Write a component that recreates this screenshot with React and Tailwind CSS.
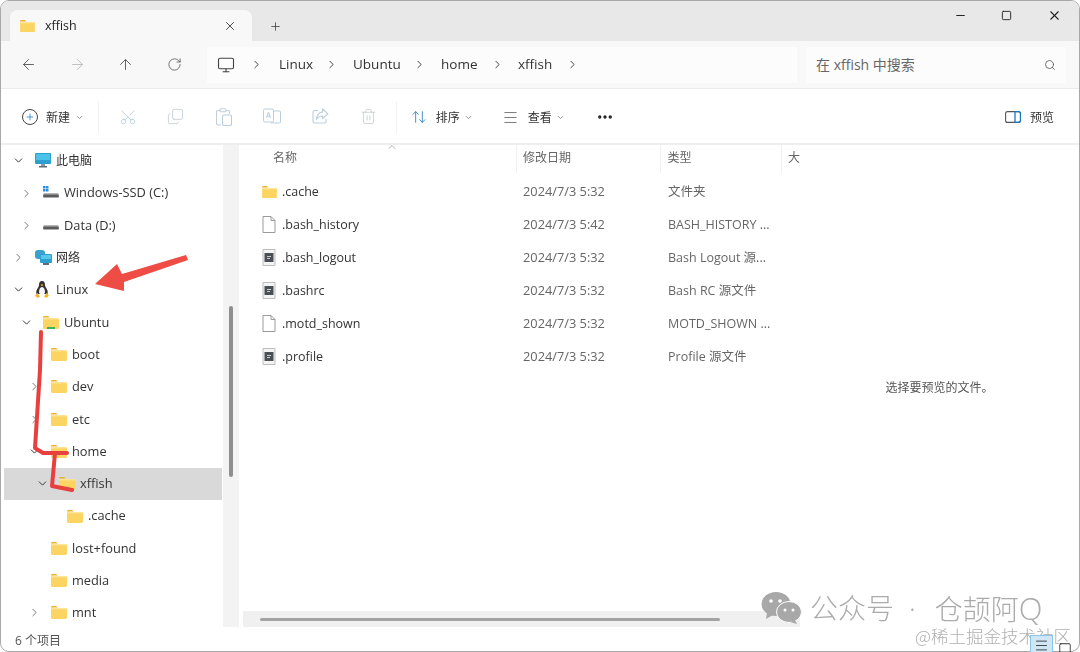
import React from "react";
import { ArrowLeft, ArrowRight, ArrowUp, RotateCw, ChevronRight, ChevronDown, ChevronUp, X, Plus, Minus, Square, Search, Monitor, Scissors, Copy, Trash2, ArrowUpDown, Menu, Ellipsis } from "lucide-react";

const Folder = ({ w = 16, h = 13, green = false }) => (
  <svg width={w} height={h} viewBox="0 0 16 13" className="shrink-0">
    <path d="M0 1.2C0 .5.5 0 1.2 0h4l1.6 1.6H0z" fill="#e9b12f" />
    <path d="M0 2.2h14.8c.7 0 1.2.5 1.2 1.2v8.4c0 .7-.5 1.2-1.2 1.2H1.2C.5 13 0 12.5 0 11.8z" fill="#fcd462" />
    <path d="M0 2.2h16v1.2H0z" fill="#fde59a" />
    {green && <path d="M4 11h8v2H4z" fill="#3fb05a" />}
  </svg>
);

const Tux = () => (
  <svg width="14" height="17" viewBox="0 0 14 17" className="shrink-0">
    <path d="M7 0C4.600 0 4 2 4 4c0 1.500-.9 2.600-1.800 4C1.300 9.500 1 11 1.500 13h11c.5-2 .2-3.500-.7-5C10.900 6.600 10 5.500 10 4c0-2-.6-4-3-4z" fill="#333" />
    <path d="M7 6c-1.900 0-3 2.500-3 5 0 1.500 1 2.500 3 2.500s3-1 3-2.500c0-2.500-1.100-5-3-5z" fill="#f5f5f5" />
    <path d="M5.500 3.800 7 3.200l1.500.6L7 5.200z" fill="#f0b429" />
    <path d="M0 14.500 2.500 12 5 15.500 2.500 17zM14 14.500 11.500 12 9 15.500 11.500 17z" fill="#f0b429" />
  </svg>
);

const PcIcon = () => (
  <svg width="16" height="15" viewBox="0 0 16 15" className="shrink-0">
    <rect x="0" y="0" width="16" height="11" rx="1" fill="#2a9fd0" />
    <rect x="1" y="1" width="14" height="6" fill="#4cc2e8" />
    <rect x="6" y="11" width="4" height="2" fill="#8a9aa5" />
    <rect x="4" y="13" width="8" height="1.500" fill="#5e6e78" />
  </svg>
);

const Drive = ({ win = false }) => (
  <svg width="16" height="14" viewBox="0 0 16 14" className="shrink-0">
    {win && <g fill="#2a8fe0"><rect x="0" y="0" width="2.500" height="2.500" /><rect x="3" y="0" width="2.500" height="2.500" /><rect x="0" y="3" width="2.500" height="2.500" /><rect x="3" y="3" width="2.500" height="2.500" /></g>}
    <path d="M1 7.500h14l.8 1.500v2.500H.2V9z" fill="#5c5c5c" />
    <path d="M1 7h14l.5 1.500H.5z" fill="#b5b5b5" />
  </svg>
);

const NetIcon = () => (
  <svg width="17" height="16" viewBox="0 0 17 16" className="shrink-0">
    <rect x="0" y="0" width="10" height="9" rx="3" fill="#3aa0cc" />
    <rect x="5" y="4" width="12" height="9" rx="1" fill="#2a9fd0" />
    <rect x="6" y="5" width="10" height="4" fill="#57c8ea" />
    <rect x="8" y="13" width="6" height="2" fill="#5e6e78" />
  </svg>
);

const TreeRow = ({ depth = 0, arrow, icon, label, selected, cjk }) => (
  <div className={`flex items-center h-[32.3px] shrink-0 ${selected ? "bg-[#d9d9d9]" : ""}`} style={{ paddingLeft: 6 + depth * 8 }}>
    <span className="w-[16px] flex justify-center text-[#777] shrink-0">
      {arrow === "down" && <ChevronDown size={13} strokeWidth={1.800} className="text-[#333]" />}
      {arrow === "right" && <ChevronRight size={13} strokeWidth={1.800} />}
    </span>
    <span className="w-[21px] ml-[9px] flex items-center shrink-0">{icon}</span>
    <span className={`${cjk ? "text-[12px]" : "text-[12.800px]"} text-[#333] whitespace-nowrap`}>{label}</span>
  </div>
);

const PlainDoc = () => (
  <svg width="14" height="17" viewBox="0 0 14 17" className="shrink-0">
    <path d="M1 .5h8l4 4v12H1z" fill="#fff" stroke="#9a9a9a" />
    <path d="M9 .5v4h4" fill="none" stroke="#9a9a9a" />
  </svg>
);
const ScriptDoc = () => (
  <svg width="14" height="17" viewBox="0 0 14 17" className="shrink-0">
    <path d="M1 .5h12v16H1z" fill="#f4f4f4" stroke="#bdbdbd" />
    <rect x="2.500" y="4" width="9" height="9" fill="#4a4f55" />
    <rect x="5" y="7" width="4" height="1" fill="#ccc" />
    <rect x="5" y="9" width="3" height="1" fill="#ccc" />
  </svg>
);

const files = [
  [<Folder w={15} h={12} />, ".cache", "2024/7/3 5:32", "文件夹"],
  [<PlainDoc />, ".bash_history", "2024/7/3 5:42", "BASH_HISTORY ..."],
  [<ScriptDoc />, ".bash_logout", "2024/7/3 5:32", "Bash Logout 源..."],
  [<ScriptDoc />, ".bashrc", "2024/7/3 5:32", "Bash RC 源文件"],
  [<PlainDoc />, ".motd_shown", "2024/7/3 5:32", "MOTD_SHOWN ..."],
  [<ScriptDoc />, ".profile", "2024/7/3 5:32", "Profile 源文件"],
];

const Crumb = ({ children, w }) => (
  <span className="text-[13.500px] text-[#333] shrink-0 pb-[1px]" style={{ width: w }}>{children}</span>
);
const Sep = () => <ChevronRight size={13} strokeWidth={1.800} className="text-[#444] shrink-0" />;

const ToolIcon = ({ children }) => <span className="w-[48.200px] flex justify-center shrink-0 text-[#b9cfdf]">{children}</span>;
const VDiv = () => <span className="block w-px h-[32px] bg-[#f2f2f2] shrink-0" />;

export default function App() {
  return (
    <div className="relative w-[1080px] h-[652px] overflow-hidden bg-white" style={{ fontFamily: '"Open Sans","Noto Sans CJK SC",sans-serif' }}>
      <div className="w-full h-full flex flex-col border border-[#a8a8a8] rounded-[9px] overflow-hidden blur-[0.5px]">
        {/* Title bar */}
        <div className="h-[40px] bg-[#e8e8e8] flex items-end shrink-0">
          <div className="ml-[9px] w-[242px] h-[31px] bg-[#f8f8f8] rounded-t-[8px] flex items-center pl-[10px] pr-[15px]">
            <Folder w={15} h={12} />
            <span className="ml-[10px] mt-[1px] text-[12.500px] font-medium text-[#222]">xffish</span>
            <X size={14} strokeWidth={1.500} className="ml-auto text-[#333]" />
          </div>
          <Plus size={13} strokeWidth={1.500} className="ml-[17px] mb-[8px] text-[#444]" />
          <div className="ml-auto flex items-center self-start mt-[7px] text-[#222]">
            <Minus size={13} strokeWidth={2} className="mr-[34px]" />
            <Square size={11} strokeWidth={2} className="mr-[35px]" />
            <X size={15} strokeWidth={1.700} className="mr-[17px]" />
          </div>
        </div>
        {/* Nav bar */}
        <div className="h-[48px] bg-[#f8f8f8] flex items-center shrink-0 border-b border-[#ececec]">
          <ArrowLeft size={17} strokeWidth={1.300} className="ml-[19px] text-[#555] shrink-0" />
          <ArrowRight size={17} strokeWidth={1.300} className="ml-[32px] text-[#bbb] shrink-0" />
          <ArrowUp size={17} strokeWidth={1.300} className="ml-[31px] text-[#555] shrink-0" />
          <RotateCw size={15} strokeWidth={1.300} className="ml-[33px] text-[#555] shrink-0" />
          <div className="ml-[25px] w-[590px] h-[36px] bg-[#fcfcfc] flex items-center shrink-0">
            <Monitor size={18} strokeWidth={1.500} className="ml-[10px] text-[#444] shrink-0" />
            <span className="ml-[14.500px] flex items-center"><Sep /></span>
            <span className="ml-[16.500px] flex"><Crumb w={45.500}>Linux</Crumb></span>
            <Sep />
            <span className="ml-[15.500px] flex"><Crumb w={59.500}>Ubuntu</Crumb></span>
            <Sep />
            <span className="ml-[15.500px] flex"><Crumb w={49.500}>home</Crumb></span>
            <Sep />
            <span className="ml-[14.500px] flex"><Crumb w={47.500}>xffish</Crumb></span>
            <Sep />
          </div>
          <div className="ml-[9px] w-[260px] h-[36px] bg-[#fcfcfc] flex items-center px-[10px] shrink-0">
            <span className="text-[14px] text-[#666] pb-[1px]">在 xffish 中搜索</span>
            <Search size={12} strokeWidth={1.600} className="ml-auto text-[#555]" />
          </div>
        </div>
        {/* Toolbar */}
        <div className="h-[56px] bg-white flex items-center shrink-0 border-b-[2px] border-[#eeeeee] pt-[2px]">
          <span className="ml-[21px] w-[16px] h-[16px] rounded-full border border-[#444] flex items-center justify-center shrink-0">
            <Plus size={10} strokeWidth={1.800} className="text-[#1a78c8]" />
          </span>
          <span className="ml-[8px] mt-[1px] text-[12px] text-[#333]">新建</span>
          <ChevronDown size={9} className="ml-[5px] text-[#777]" />
          <span className="ml-[14px]"><VDiv /></span>
          <span className="flex ml-[4.500px]">
            <ToolIcon><Scissors size={18} strokeWidth={1.200} className="-rotate-90" /></ToolIcon>
            <ToolIcon><Copy size={17} strokeWidth={1.200} className="-scale-y-100 text-[#c5ced6]" /></ToolIcon>
            <ToolIcon>
              <svg width="16" height="18" viewBox="0 0 16 18" fill="none" stroke="#c5ced6" strokeWidth="1.100"><path d="M4 2.500H2a1.500 1.500 0 0 0-1.500 1.500v11.500A1.500 1.500 0 0 0 2 17h3" /><path d="M10 2.500h2A1.500 1.500 0 0 1 13.500 4v2" /><rect x="4" y=".8" width="6" height="3" rx="1" /><rect x="6.500" y="7" width="9" height="10.500" rx="1.500" stroke="#b9cfdf" /></svg>
            </ToolIcon>
            <ToolIcon>
              <svg width="18" height="16" viewBox="0 0 18 16" fill="none" stroke="#b9cfdf" strokeWidth="1"><rect x=".5" y="1" width="10" height="13" rx="1.500" /><path d="M10.500 3h6a1 1 0 0 1 1 1v10a1 1 0 0 1-1 1H8" /><path d="M3.500 10 5.500 4l2 6M4.200 8.200h2.600" /></svg>
            </ToolIcon>
            <ToolIcon>
              <svg width="17" height="16" viewBox="0 0 17 16" fill="none" stroke="#b9cfdf" strokeWidth="1.100"><path d="M6 2.500H2.500A1.500 1.500 0 0 0 1 4v9.500A1.500 1.500 0 0 0 2.500 15h10a1.500 1.500 0 0 0 1.500-1.500V11" /><path d="M10.500 1 16 5.800 10.500 10.500V8C7.500 8 5.500 9 4.500 11.500 4.500 7.500 7 4.300 10.500 4z" strokeLinejoin="round" /></svg>
            </ToolIcon>
            <ToolIcon><Trash2 size={17} strokeWidth={1.200} className="text-[#c5ced6]" /></ToolIcon>
          </span>
          <span className="ml-[3px]"><VDiv /></span>
          <ArrowUpDown size={16} strokeWidth={1.300} className="ml-[14px] text-[#2a7fc4] shrink-0" />
          <span className="ml-[9px] mt-[1px] text-[12px] text-[#333]">排序</span>
          <ChevronDown size={9} className="ml-[4px] text-[#777]" />
          <Menu size={17} strokeWidth={1.100} className="ml-[29px] text-[#555] shrink-0" />
          <span className="ml-[9px] mt-[1px] text-[12px] text-[#333]">查看</span>
          <ChevronDown size={9} className="ml-[4px] text-[#777]" />
          <Ellipsis size={18} strokeWidth={2.500} className="ml-[31px] text-[#222] shrink-0" />
          <svg width="16" height="12" viewBox="0 0 16 12" fill="none" className="ml-auto shrink-0"><rect x=".6" y=".6" width="14.800" height="10.800" rx="2" stroke="#555" strokeWidth="1.100" /><path d="M10 .6v10.800" stroke="#1a78c8" strokeWidth="1.300" /><path d="M10 .6h3.500a2 2 0 0 1 2 2v6.800a2 2 0 0 1-2 2H10" stroke="#1a78c8" strokeWidth="1.100" /></svg>
          <span className="ml-[9px] mr-[25px] mt-[1px] text-[12px] text-[#333]">预览</span>
        </div>
        {/* Body */}
        <div className="h-[482px] flex shrink-0">
          <div className="w-[222px] shrink-0 pl-[3px] pr-[1px] flex flex-col overflow-hidden">
            <div className="-mt-[0.4px] flex flex-col">
              <TreeRow arrow="down" icon={<PcIcon />} label="此电脑" cjk />
              <TreeRow depth={1} arrow="right" icon={<Drive win />} label="Windows-SSD (C:)" />
              <TreeRow depth={1} arrow="right" icon={<Drive />} label="Data (D:)" />
              <TreeRow arrow="right" icon={<NetIcon />} label="网络" cjk />
              <TreeRow arrow="down" icon={<Tux />} label="Linux" />
              <TreeRow depth={1} arrow="down" icon={<Folder green />} label="Ubuntu" />
              <TreeRow depth={2} icon={<Folder />} label="boot" />
              <TreeRow depth={2} arrow="right" icon={<Folder />} label="dev" />
              <TreeRow depth={2} arrow="right" icon={<Folder />} label="etc" />
              <TreeRow depth={2} arrow="down" icon={<Folder />} label="home" />
              <TreeRow depth={3} arrow="down" icon={<Folder />} label="xffish" selected />
              <TreeRow depth={4} icon={<Folder />} label=".cache" />
              <TreeRow depth={2} icon={<Folder />} label="lost+found" />
              <TreeRow depth={2} icon={<Folder />} label="media" />
              <TreeRow depth={2} arrow="right" icon={<Folder />} label="mnt" />
            </div>
          </div>
          <div className="w-[16px] shrink-0 bg-[#f3f3f3] flex justify-center pt-[161px]">
            <div className="w-[4px] h-[171px] rounded-full bg-[#8e8e8e]" />
          </div>
          {/* File list */}
          <div className="w-[561px] shrink-0 flex flex-col">
            <div className="h-[28px] flex text-[12px] text-[#666] items-center shrink-0">
              <div className="w-[279px] pl-[34px] pb-[2px] relative h-full flex items-center border-r border-[#f0f0f0]">
                名称
                <ChevronUp size={12} strokeWidth={1.300} className="absolute left-[147px] -top-[4px] text-[#888]" />
              </div>
              <div className="w-[145px] pl-[6px] pb-[2px] h-full flex items-center border-r border-[#f0f0f0]">修改日期</div>
              <div className="w-[121px] pl-[6px] pb-[2px] h-full flex items-center border-r border-[#f0f0f0]">类型</div>
              <div className="pl-[6px] pb-[2px]">大</div>
            </div>
            <div className="flex-1 pt-[2px]">
              {files.map(([icon, name, date, type]) => (
                <div key={name} className="h-[33px] flex items-center">
                  <span className="ml-[23px] w-[20px] flex shrink-0">{icon}</span>
                  <span className="w-[241px] mt-[1px] text-[12.500px] text-[#333] shrink-0">{name}</span>
                  <span className="w-[145px] text-[12.800px] text-[#666] shrink-0">{date}</span>
                  <span className="mt-[1px] text-[12.500px] text-[#666] whitespace-nowrap">{type}</span>
                </div>
              ))}
            </div>
            <div className="h-[16px] ml-[4px] bg-[#f0f0f0] flex items-center pl-[17px] shrink-0">
              <div className="w-[460px] h-[3px] rounded-full bg-[#a3a3a3]" />
            </div>
          </div>
          {/* Preview */}
          <div className="flex-1 flex justify-center pt-[234px]">
            <span className="text-[12px] text-[#555] h-fit">选择要预览的文件。</span>
          </div>
        </div>
        {/* Status bar */}
        <div className="flex-1 flex items-center pl-[14px] pt-[4px] text-[12px] text-[#555]">6 个项目</div>
      </div>

      {/* Red annotations */}
      <svg width="1080" height="652" viewBox="0 0 1080 652" className="absolute inset-0 pointer-events-none blur-[0.5px]">
        <polygon points="95,284 117,264 122,274 186,255 188,260 124,282 124,291" fill="#ee4c45" />
        <path d="M41 332 40 370 35 448 43 453 67 453M55 453 52 486 72 490" fill="none" stroke="#e8403f" strokeWidth="4" strokeLinejoin="round" strokeLinecap="round" />
      </svg>

      {/* Watermark */}
      <div className="absolute left-[761px] top-[591px] flex items-center text-[#ababab] font-light">
        <svg width="41" height="34" viewBox="0 0 41 34">
          <ellipse cx="15" cy="13" rx="14.500" ry="12" fill="#a8a8a8" />
          <path d="M6 22 5 28 12 24z" fill="#a8a8a8" />
          <ellipse cx="28" cy="21" rx="12.500" ry="10.500" fill="#a8a8a8" stroke="#fff" strokeWidth="1" />
          <path d="M34 29 36 33 29 31z" fill="#a8a8a8" />
          <circle cx="10" cy="10" r="1.800" fill="#fff" /><circle cx="19" cy="10" r="1.800" fill="#fff" />
          <circle cx="24" cy="19" r="1.500" fill="#fff" /><circle cx="32" cy="19" r="1.500" fill="#fff" />
        </svg>
        <span className="ml-[8px] text-[28px] leading-none whitespace-nowrap">公众号</span>
        <span className="ml-[15px] text-[28px] leading-none">·</span>
        <span className="ml-[19px] text-[28px] leading-none whitespace-nowrap">仓颉阿<span className="text-[31px]">Q</span></span>
      </div>
      <div className="absolute left-[915px] top-[627px] text-[#b0b0b0] text-[17.500px] font-light leading-none whitespace-nowrap" style={{ fontFamily: '"Noto Sans CJK SC",serif' }}>@稀土掘金技术社区</div>
      <div className="absolute left-[1030px] top-[635px] flex items-start gap-[5px]">
        <span className="w-[23px] h-[20px] bg-[#cfe6f5] border border-[#8cc4e6] flex items-center justify-center"><Menu size={15} strokeWidth={1.400} className="text-[#333]" /></span>
        <Square size={14} strokeWidth={1.500} className="text-[#333] mt-[7px]" />
      </div>
    </div>
  );
}
